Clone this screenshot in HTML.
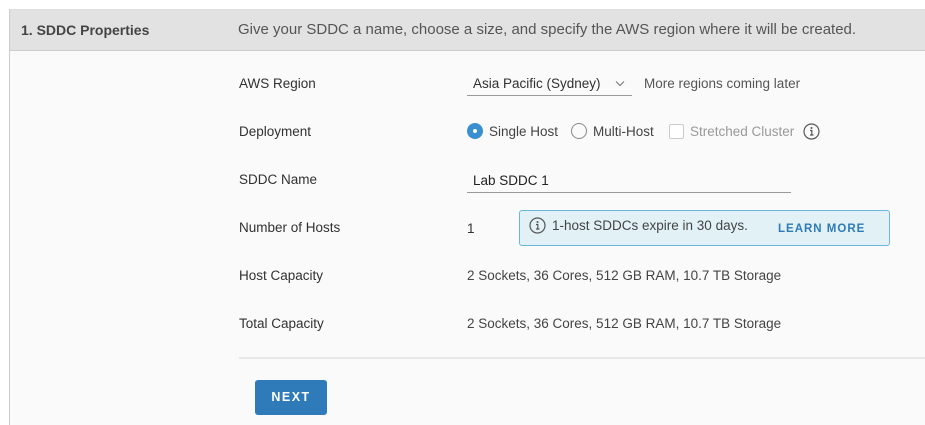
<!DOCTYPE html>
<html><head><style>
body{margin:0;width:925px;height:425px;background:#fff;font-family:"Liberation Sans",sans-serif;color:#313131;font-size:13.5px;overflow:hidden;position:relative}
.panel{position:absolute;left:9px;top:9px;right:0;bottom:0;background:#fafafa;border-left:1px solid #ccc;border-top:1px solid #ddd}
.hdr{position:absolute;left:0;right:0;top:0;height:40px;background:#e2e2e2;border-bottom:1px solid #ccc}
.a{position:absolute;white-space:nowrap;line-height:16px}
</style></head><body>
<div class="panel"><div class="hdr"></div></div>
<div class="a" style="left:21px;top:22px;font-weight:bold;color:#444;font-size:14px">1. SDDC Properties</div>
<div class="a" style="left:238px;top:22px;color:#555;font-size:15px">Give your SDDC a name, choose a size, and specify the AWS region where it will be created.</div>

<div class="a" style="left:239px;top:76px">AWS Region</div>
<div class="a" style="left:239px;top:124px">Deployment</div>
<div class="a" style="left:239px;top:172px">SDDC Name</div>
<div class="a" style="left:239px;top:220px">Number of Hosts</div>
<div class="a" style="left:239px;top:268px">Host Capacity</div>
<div class="a" style="left:239px;top:316px">Total Capacity</div>

<div class="a" style="left:473px;top:76px">Asia Pacific (Sydney)</div>
<svg style="position:absolute;left:615px;top:80px" width="10" height="7" viewBox="0 0 10 7"><path d="M1 1.5l4 4 4-4" stroke="#777" stroke-width="1.1" fill="none"/></svg>
<div style="position:absolute;left:467px;top:95px;width:165px;height:1px;background:#999"></div>
<div class="a" style="left:644px;top:76px;color:#555">More regions coming later</div>

<div style="position:absolute;left:467px;top:123px;width:16px;height:16px;border-radius:50%;background:#3a8fd0"></div>
<div style="position:absolute;left:473px;top:129px;width:4px;height:4px;border-radius:50%;background:#fff"></div>
<div class="a" style="left:489px;top:124px;color:#444">Single Host</div>
<div style="position:absolute;left:571px;top:123px;width:14px;height:14px;border-radius:50%;border:1px solid #888"></div>
<div class="a" style="left:593px;top:124px;color:#444">Multi-Host</div>
<div style="position:absolute;left:669px;top:124px;width:13px;height:13px;border:1px solid #ccc;border-radius:2px;background:#fff"></div>
<div class="a" style="left:690px;top:124px;color:#999">Stretched Cluster</div>
<svg style="position:absolute;left:803px;top:123px" width="17" height="17" viewBox="0 0 17 17"><circle cx="8.5" cy="8.5" r="7.5" fill="none" stroke="#555" stroke-width="1.2"/><circle cx="8.5" cy="5" r="1" fill="#555"/><path d="M7 7.5h1.8v4.5M7 12h3.5" stroke="#555" stroke-width="1.2" fill="none"/></svg>

<div class="a" style="left:473px;top:173px;color:#222">Lab SDDC 1</div>
<div style="position:absolute;left:467px;top:192px;width:324px;height:1px;background:#999"></div>

<div class="a" style="left:467px;top:221px">1</div>
<div style="position:absolute;left:519px;top:210px;width:369px;height:34px;background:#e1f1f6;border:1px solid #6cb6de;border-radius:3px"></div>
<svg style="position:absolute;left:529px;top:217px" width="17" height="17" viewBox="0 0 17 17"><circle cx="8.5" cy="8.5" r="7.5" fill="none" stroke="#555" stroke-width="1.2"/><circle cx="8.5" cy="5" r="1" fill="#555"/><path d="M7 7.5h1.8v4.5M7 12h3.5" stroke="#555" stroke-width="1.2" fill="none"/></svg>
<div class="a" style="left:552px;top:218px;color:#444">1-host SDDCs expire in 30 days.</div>
<div class="a" style="left:778px;top:221px;color:#2f7ab8;font-weight:bold;font-size:11.5px;letter-spacing:1px">LEARN MORE</div>

<div class="a" style="left:467px;top:268px;color:#444">2 Sockets, 36 Cores, 512 GB RAM, 10.7 TB Storage</div>
<div class="a" style="left:467px;top:316px;color:#444">2 Sockets, 36 Cores, 512 GB RAM, 10.7 TB Storage</div>

<div style="position:absolute;left:239px;top:357px;right:0;height:2px;background:#e8e8e8"></div>
<div style="position:absolute;left:255px;top:380px;width:72px;height:35px;background:#2f7ab8;border-radius:3px;color:#fff;font-weight:bold;font-size:12.5px;letter-spacing:1.5px;text-align:center;line-height:35px">NEXT</div>
</body></html>
